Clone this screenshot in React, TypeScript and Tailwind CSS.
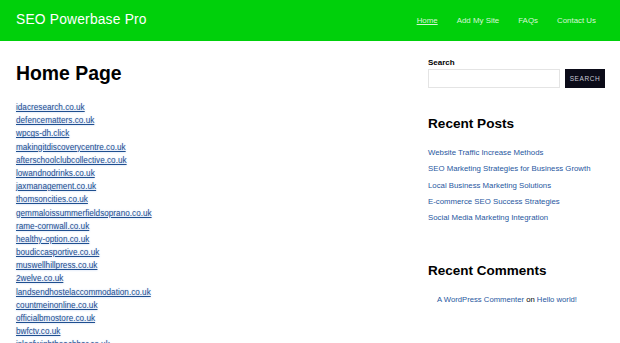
const links = [
  'idacresearch.co.uk',
  'defencematters.co.uk',
  'wpcgs-dh.click',
  'makingitdiscoverycentre.co.uk',
  'afterschoolclubcollective.co.uk',
  'lowandnodrinks.co.uk',
  'jaxmanagement.co.uk',
  'thomsoncities.co.uk',
  'gemmaloissummerfieldsoprano.co.uk',
  'rame-cornwall.co.uk',
  'healthy-option.co.uk',
  'boudiccasportive.co.uk',
  'muswellhillpress.co.uk',
  '2welve.co.uk',
  'landsendhostelaccommodation.co.uk',
  'countmeinonline.co.uk',
  'officialbmostore.co.uk',
  'bwfctv.co.uk',
  'isleofwightbeachbar.co.uk',
]

const posts = [
  'Website Traffic Increase Methods',
  'SEO Marketing Strategies for Business Growth',
  'Local Business Marketing Solutions',
  'E-commerce SEO Success Strategies',
  'Social Media Marketing Integration',
]

const nav = ['Home', 'Add My Site', 'FAQs', 'Contact Us']

export default function App() {
  return (
    <div className="w-[620px] h-[343px] overflow-hidden bg-white font-['Liberation_Sans',Arial,sans-serif]">
      {/* Header */}
      <header className="h-[41px] bg-[#00d00b] flex items-center justify-between pl-4 pr-[24px]">
        <span className="text-white text-[13.8px] tracking-[0.2px]">SEO Powerbase Pro</span>
        <nav className="flex gap-[19px] text-[7.9px] text-[#d8f7d8]">
          {nav.map((n, i) => (
            <a key={n} className={i === 0 ? 'underline' : ''}>{n}</a>
          ))}
        </nav>
      </header>

      <div className="flex pl-4 pr-[15px]">
        {/* Main */}
        <main className="flex-1 pt-[19px]">
          <h1 className="text-[19.4px] font-bold leading-[26px] text-black">Home Page</h1>
          <ul className="mt-[15px] flex flex-col">
            {links.map(l => (
              <li key={l} className="h-[13.2px] leading-[13.2px] text-[8.2px]">
                <a className="text-[#1f4f8f] underline [text-shadow:0_0_2px_#b7cdf0]">{l}</a>
              </li>
            ))}
          </ul>
        </main>

        {/* Sidebar */}
        <aside className="w-[177px] pt-[16px]">
          <label className="block text-[8px] font-bold text-black leading-[11px]">Search</label>
          <div className="flex gap-[5px] mt-[1px]">
            <input className="w-[132px] h-[19px] border border-[#e4e4e4] bg-white outline-none" />
            <button className="w-[40px] h-[19px] bg-[#0b0b18] text-[#c9c9d6] text-[6.5px] tracking-[0.6px]">SEARCH</button>
          </div>

          <h2 className="mt-[27px] text-[13.6px] font-bold text-black leading-[18px]">Recent Posts</h2>
          <ul className="mt-[12px] flex flex-col">
            {posts.map(p => (
              <li key={p} className="h-[16.3px] leading-[16.3px] text-[7.8px] whitespace-nowrap">
                <a className="text-[#2757a0]">{p}</a>
              </li>
            ))}
          </ul>

          <h2 className="mt-[36px] text-[13.5px] font-bold text-black leading-[18px]">Recent Comments</h2>
          <p className="mt-[14px] pl-[9px] text-[7.7px] leading-[12px] text-black">
            <a className="text-[#2757a0]">A WordPress Commenter</a> on <a className="text-[#2757a0]">Hello world!</a>
          </p>
        </aside>
      </div>
    </div>
  )
}
